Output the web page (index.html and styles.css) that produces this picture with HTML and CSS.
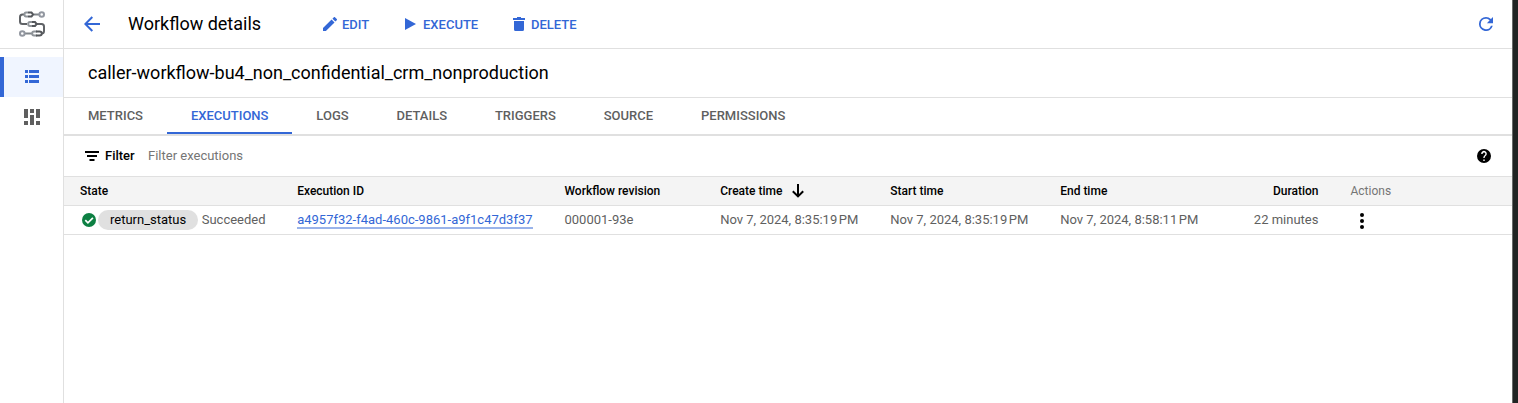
FILE: index.html
```
<!DOCTYPE html>
<html lang="en">
<head>
<meta charset="utf-8">
<title>Workflow details</title>
<link rel="stylesheet" href="styles.css">
</head>
<body>
<div class="app">
  <nav class="sidebar">
    <div class="product">
      <svg width="28" height="28" viewBox="0 0 28 28" fill="none" stroke-width="2">
        <path stroke="#606367" d="M6 4.500H4.500Q2 4.500 2 7V11.500Q2 14 4.500 14H9M19 14H23.500Q26 14 26 16.500V21Q26 23.500 23.500 23.500"/>
        <path stroke="#80858a" d="M16 4.500h5.500M7 23.500h7"/>
        <circle cx="23.700" cy="4.500" r="2.300" stroke="#9297a0"/>
        <circle cx="4.300" cy="23.500" r="2.300" stroke="#9297a0"/>
        <path stroke="#8f9499" d="M10 2.500H8q-1.500 0-1.500 2t1.500 2h2M14 12h-2q-1.800 0-1.800 2t1.800 2h2M19 21.500h-3q-1.800 0-1.800 2t1.800 2h3"/>
        <path stroke="#55585c" d="M10 2.500h3.500l1.700 2-1.700 2H10M14 12h3l1.700 2-1.700 2h-3M18 21.500h3.500q2.300 0 2.300 2t-2.300 2H18"/>
      </svg>
    </div>
    <a class="side-item active">
      <svg width="14" height="13" viewBox="0 0 14 13" fill="#3367d6"><path d="M0 0h3v3H0zM4 0h10v3H4zM0 5h3v3H0zM4 5h10v3H4zM0 10h3v3H0zM4 10h10v3H4z"/></svg>
    </a>
    <a class="side-item">
      <svg width="16" height="16" viewBox="0 0 16 16" fill="#5f5f5f"><path d="M0 0h4v9H0zM0 12h4v4H0zM6 0h4v4H6zM6 6h4v10H6zM12 0h4v9h-4zM12 12h4v4h-4z"/></svg>
    </a>
  </nav>
  <main class="main">
    <header class="toolbar">
      <svg class="back" width="16" height="16" viewBox="0 0 16 16" fill="none" stroke="#3367d6" stroke-width="2"><path d="M16 8H1.500M8.300 1 1.300 8l7 7"/></svg>
      <h1 class="title">Workflow details</h1>
      <div class="actions">
        <a class="action edit"><svg width="14" height="14" viewBox="3 3 18 18"><path d="M3 17.250V21h3.750L17.810 9.940l-3.750-3.750L3 17.250zM20.710 7.040a1 1 0 0 0 0-1.410l-2.340-2.340a1 1 0 0 0-1.410 0l-1.830 1.830 3.750 3.750 1.830-1.830z"/></svg><span>EDIT</span></a>
        <a class="action execute"><svg width="11" height="12" viewBox="0 0 11 12"><path d="M0 0l11 6-11 6z"/></svg><span>EXECUTE</span></a>
        <a class="action delete"><svg width="12" height="14" viewBox="0 0 12 14"><path d="M1 4h10v8.500Q11 14 9.500 14h-7Q1 14 1 12.500zM0 1h4V0h4v1h4v2H0z"/></svg><span>DELETE</span></a>
      </div>
      <svg class="refresh" width="14" height="14" viewBox="4 4 16 16"><path d="M17.650 6.350A7.960 7.960 0 0 0 12 4a8 8 0 1 0 7.730 10h-2.080A6 6 0 1 1 12 6c1.660 0 3.140.69 4.220 1.780L13 11h7V4l-2.350 2.350z"/></svg>
    </header>
    <h2 class="name">caller-workflow-bu4_non_confidential_crm_nonproduction</h2>
    <div class="tabs">
      <a class="tab">METRICS</a><a class="tab selected">EXECUTIONS</a><a class="tab">LOGS</a><a class="tab">DETAILS</a><a class="tab">TRIGGERS</a><a class="tab">SOURCE</a><a class="tab">PERMISSIONS</a>
    </div>
    <div class="filter">
      <svg width="14" height="10" viewBox="0 0 14 10"><path d="M0 0h14v2H0zM2 4h10v2H2zM4.500 8h5v2h-5z"/></svg>
      <b class="filter-label">Filter</b>
      <span class="placeholder">Filter executions</span>
      <svg class="help" width="14" height="14" viewBox="2 2 20 20"><path d="M12 2a10 10 0 1 0 0 20 10 10 0 0 0 0-20zm1 17h-2v-2h2v2zm2.070-7.750-.9.920C13.450 12.900 13 13.500 13 15h-2v-.5c0-1.100.45-2.100 1.170-2.830l1.240-1.260A2 2 0 1 0 10 9H8a4 4 0 1 1 7.070 2.250z"/></svg>
    </div>
    <div class="table">
      <div class="row head">
        <span>State</span><span>Execution ID</span><span>Workflow revision</span>
        <span class="sorted">Create time<svg width="12" height="14" viewBox="0 0 12 14" fill="none" stroke="#000" stroke-width="2"><path d="M6 0v12M.8 7.200 6 12.400l5.200-5.200"/></svg></span>
        <span>Start time</span><span>End time</span><span class="right">Duration</span><span class="muted">Actions</span>
      </div>
      <div class="row data">
        <span class="state"><svg width="14" height="14" viewBox="0 0 14 14"><circle cx="7" cy="7" r="7" fill="#0d8043"/><path d="M3.300 7.200 5.900 9.800l5-5" fill="none" stroke="#fff" stroke-width="1.700"/></svg><span class="chip">return_status</span><span class="status">Succeeded</span></span>
        <span><a class="link">a4957f32-f4ad-460c-9861-a9f1c47d3f37</a></span>
        <span>000001-93e</span>
        <span class="date">Nov 7, 2024, 8:35:19&#8239;PM</span><span class="date">Nov 7, 2024, 8:35:19&#8239;PM</span><span class="date">Nov 7, 2024, 8:58:11&#8239;PM</span>
        <span class="right">22 minutes</span>
        <span class="more"><svg width="4" height="16" viewBox="0 0 4 16"><circle cx="2" cy="2" r="2"/><circle cx="2" cy="8" r="2"/><circle cx="2" cy="14" r="2"/></svg></span>
      </div>
    </div>
  </main>
  <div class="edge"></div>
</div>
</body>
</html>
```
FILE: styles.css
```
* { box-sizing: border-box; }
body { margin: 0; background: #fff; color: #000; font-family: Roboto, sans-serif; font-size: 13px; overflow: hidden; }
svg { display: block; flex: none; }
.app { display: flex; height: 403px; }
.sidebar { width: 64px; flex: none; border-right: 1px solid #e0e0e0; }
.product { height: 49px; border-bottom: 1px solid #e0e0e0; padding: 10px 0 0 18px; margin-bottom: 8px; }
.side-item { display: flex; height: 40px; align-items: center; justify-content: center; }
.side-item.active { background: #f0f5ff; border-left: 4px solid #3367d6; padding: 0 4px 1px 0; }
.main { flex: 1; min-width: 0; }
.edge { width: 6px; flex: none; background: #202423; border-left: 1px solid #686b6a; }
.toolbar { display: flex; align-items: center; height: 49px; border-bottom: 1px solid #e0e0e0; padding: 0 19px 0 20px; }
.title { margin: 0 0 0 28px; width: 195px; font-size: 18px; font-weight: 400; line-height: 24px; white-space: nowrap; }
.actions { display: flex; align-items: center; padding-top: 1px; }
.action { display: flex; align-items: center; font-weight: 500; color: #3367d6; line-height: 20px; }
.action svg { fill: #3367d6; margin-bottom: 2px; }
.edit { gap: 5px; width: 82px; }
.execute { gap: 7px; width: 108px; }
.delete { gap: 6px; }
.refresh { margin-left: auto; fill: #3367d6; }
.name { margin: 0; height: 49px; padding-left: 24px; border-bottom: 1px solid #e0e0e0; font-size: 18px; font-weight: 400; line-height: 48px; }
.tabs { display: flex; height: 38px; border-bottom: 2px solid #e0e0e0; }
.tab { padding: 0 23.960px; font-weight: 500; line-height: 36px; color: #5f5f5f; }
.tab:first-child { padding-left: 24px; }
.tab.selected { color: #3367d6; border-bottom: 2px solid #3367d6; }
.filter { display: flex; align-items: center; height: 40px; padding: 0 21px; }
.filter-label { margin-left: 6px; width: 43px; font-weight: 500; font-size: 13px; }
.filter-label, .placeholder { line-height: 16px; }
.placeholder { color: #757575; }
.help { margin-left: auto; }
.row { display: grid; grid-template-columns: 217.200px 267.300px 155.700px 170px 170px 150px 108.300px 1fr; height: 29px; align-items: center; padding-left: 16px; border-bottom: 1px solid #e0e0e0; color: #5f5f5f; line-height: 16px; white-space: nowrap; }
.head { height: 30px; background: #f4f4f4; border-top: 1px solid #e0e0e0; font-size: 12px; font-weight: 500; color: #000; }
.sorted { display: flex; align-items: center; gap: 10px; }
.right { text-align: right; }
.muted { padding-left: 32px; color: #757575; font-weight: 400; }
.state { display: flex; align-items: center; padding-left: 2px; }
.chip { height: 20px; padding: 0 12px; margin: 0 3.500px 0 2px; border-radius: 10px; background: #e0e0e0; color: #000; line-height: 20px; }
.link { color: #3367d6; border-bottom: 2px solid #99b3ea; display: inline-block; line-height: 15px; height: 17px; margin-top: 1px; }
.more { padding: 1px 0 0 42px; }
```
